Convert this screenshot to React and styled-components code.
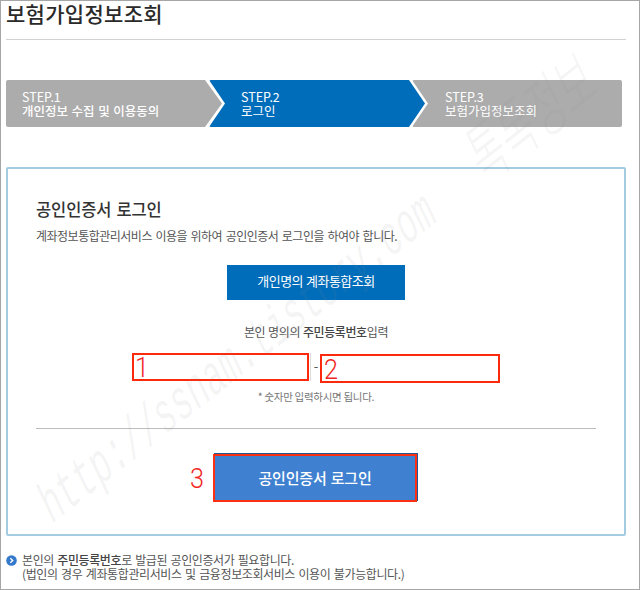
import styled, { createGlobalStyle } from 'styled-components'

const GlobalStyle = createGlobalStyle`
    * {
        box-sizing: border-box;
    }
    body {
        margin: 0;
        background: #fff;
        font-family: 'Noto Sans CJK KR', sans-serif;
    }
`

const Page = styled.div`
    position: relative;
    width: 640px;
    height: 590px;
    padding: 0 13px 0 5px;
    border: 1px solid #a6a6a6;
    overflow: hidden;
    display: flex;
    flex-direction: column;
    color: #555;
`
const Text = styled.div`
    font-size: ${(p) => p.$size}px;
    line-height: ${(p) => p.$line || 14}px;
    letter-spacing: ${(p) => p.$spacing || 0}px;
    word-spacing: ${(p) => p.$word || 0}px;
    font-weight: ${(p) => p.$weight || 400};
    color: ${(p) => p.$color || 'inherit'};
    margin-top: ${(p) => p.$top || 0}px;
    white-space: pre;

    b {
        font-weight: 500;
        color: #444;
    }
`
const Title = styled.header`
    height: 39px;
    border-bottom: 1px solid #d2d2d2;
`
const Steps = styled.div`
    display: flex;
    margin-top: 40px;
    height: 47px;
    width: 616px;
`
const Step = styled.div`
    flex: none;
    width: ${(p) => p.$width}px;
    margin-left: ${(p) => (p.$first ? 0 : -13)}px;
    padding: 10px 0 0 ${(p) => p.$pad}px;
    background: ${(p) => (p.$active ? '#006dba' : '#acacac')};
    border-radius: 2px;
    clip-path: ${(p) => p.$shape};
    color: #fff;
`
const Panel = styled.section`
    height: 369px;
    margin-top: 40px;
    padding: 30px 28px 0;
    border: 2px solid #a3cbe2;
    border-radius: 2px;
    display: flex;
    flex-direction: column;
`
const BlueButton = styled.button`
    align-self: center;
    width: 178px;
    height: 35px;
    margin: 21px 0 0;
    padding: 0 0 4px;
    border: 0;
    background: #006dba;
    font-family: inherit;
    display: flex;
    align-items: center;
    justify-content: center;
`
const Centered = styled.div`
    display: flex;
    justify-content: center;
    margin-top: ${(p) => p.$top}px;
`
const Inputs = styled.div`
    display: flex;
    height: 30px;
    margin: 14px 0 0 96px;
`
const Field = styled.div`
    width: ${(p) => p.$width}px;
    height: ${(p) => p.$height}px;
    margin-top: ${(p) => p.$top || 0}px;
    padding: ${(p) => p.$pad}px 0 0 ${(p) => p.$pad}px;
    border: 2px solid #fb2a0c;
    box-shadow: ${(p) => (p.$edge ? '1px 0 0 #fff, 2px 0 0 #dcdcdc' : 'none')};
`
const Dash = styled.div`
    width: 11px;
    padding: 4px 0 0 3px;
    text-align: center;
    font-size: 13px;
    line-height: 17px;
`
const Mark = styled.span`
    display: block;
    font-family: Roboto, 'Liberation Sans', sans-serif;
    font-weight: 300;
    font-size: 28px;
    line-height: 24px;
    color: #f32626;
    transform: scaleX(0.9);
    transform-origin: left;
`
const Divider = styled.div`
    height: 1px;
    margin-top: 24px;
    background: #bcbcbc;
`
const LoginRow = styled.div`
    display: flex;
    margin: 24px 0 0 154px;
    height: 49px;
`
const MarkBox = styled.div`
    width: 23px;
    padding-top: 14px;
`
const LoginButton = styled.button`
    width: 204px;
    height: 48px;
    margin: 1px 0 0;
    padding: 0;
    border: 2px solid #fb2f12;
    background: #3f81d0;
    box-shadow: 1px -1px 0 #1f5a94;
    font-family: inherit;
    display: flex;
    align-items: center;
    justify-content: center;
`
const Notice = styled.footer`
    display: flex;
    gap: 5px;
    padding-top: 17px;

    svg {
        flex: none;
        margin-top: 2px;
    }
`
const Watermark = styled.div`
    position: absolute;
    left: 38px;
    top: 498px;
    width: 0;
    height: 0;
    font-family: 'Liberation Mono', 'Noto Sans CJK KR', monospace;
    font-size: 34px;
    line-height: 0;
    white-space: pre;
    color: rgba(140, 140, 140, 0.09);
    transform: matrix(0.79, -0.62, 0.72, 1.5, 0, 0);
    transform-origin: 0 0;
    pointer-events: none;
`
const Korean = styled.span`
    margin-left: 17px;
    font-family: 'Noto Sans CJK KR', sans-serif;
    font-weight: 300;
    font-size: 40px;
`

const steps = [
    { no: 'STEP.1', label: '개인정보 수집 및 이용동의', width: 216, pad: 16, weight: 500, shape: 'polygon(0 0, 199px 0, 216px 50%, 199px 100%, 0 100%)' },
    { no: 'STEP.2', label: '로그인', width: 216, pad: 32, active: true, shape: 'polygon(0 0, 200px 0, 216px 50%, 200px 100%, 0 100%, 16px 50%)' },
    { no: 'STEP.3', label: '보험가입정보조회', width: 210, pad: 33, shape: 'polygon(0 0, 100% 0, 100% 100%, 0 100%, 16px 50%)' },
]

const App = () => {
    return (
        <>
            <GlobalStyle />
            <Page>
                <Title>
                    <Text $size={21} $line={25} $spacing={0.3} $weight={500} $color="#2a2a2a">보험가입정보조회</Text>
                </Title>
                <Steps>
                    {steps.map((s, i) => (
                        <Step key={s.no} $first={i === 0} $width={s.width} $pad={s.pad} $active={s.active} $shape={s.shape}>
                            <Text $size={12.5}>{s.no}</Text>
                            <Text $size={12.5} $weight={s.weight} $word={0.8}>{s.label}</Text>
                        </Step>
                    ))}
                </Steps>
                <Panel>
                    <Text $size={16.5} $line={20} $spacing={-0.1} $word={1.4} $weight={500} $color="#333">공인인증서 로그인</Text>
                    <Text $size={12} $line={16} $spacing={-0.5} $word={1.3} $top={9}>계좌정보통합관리서비스 이용을 위하여 공인인증서 로그인을 하여야 합니다.</Text>
                    <BlueButton>
                        <Text $size={13} $color="#fff" $spacing={-0.5} $word={0.5}>개인명의 계좌통합조회</Text>
                    </BlueButton>
                    <Centered $top={25}>
                        <Text $size={12} $spacing={-0.4} $word={0.6}>본인 명의의 <b>주민등록번호</b>입력</Text>
                    </Centered>
                    <Inputs>
                        <Field $width={177} $height={28} $pad={1} $edge><Mark>1</Mark></Field>
                        <Dash>-</Dash>
                        <Field $width={180} $height={29} $top={1} $pad={2}><Mark>2</Mark></Field>
                    </Inputs>
                    <Centered $top={7}>
                        <Text $size={10.5} $color="#777" $spacing={-0.3}>* 숫자만 입력하시면 됩니다.</Text>
                    </Centered>
                    <Divider />
                    <LoginRow>
                        <MarkBox><Mark>3</Mark></MarkBox>
                        <LoginButton>
                            <Text $size={15} $weight={500} $color="#fff" $spacing={-0.2} $word={1}>공인인증서 로그인</Text>
                        </LoginButton>
                    </LoginRow>
                </Panel>
                <Notice>
                    <svg width="11" height="11" viewBox="0 0 11 11">
                        <circle cx="5.5" cy="5.5" r="5.3" fill="#3478cb" />
                        <path d="M4.3 3.2 L6.7 5.5 L4.3 7.8" fill="none" stroke="#fff" strokeWidth="1.4" />
                    </svg>
                    <div>
                        <Text $size={12} $spacing={-0.4} $word={1.1}>본인의 <b>주민등록번호</b>로 발급된 공인인증서가 필요합니다.</Text>
                        <Text $size={12} $spacing={-0.4} $word={1.2}>(법인의 경우 계좌통합관리서비스 및 금융정보조회서비스 이용이 불가능합니다.)</Text>
                    </div>
                </Notice>
                <Watermark>http://ssnam.tistory.com  <Korean>톡톡정보</Korean></Watermark>
            </Page>
        </>
    )
}
export default App
